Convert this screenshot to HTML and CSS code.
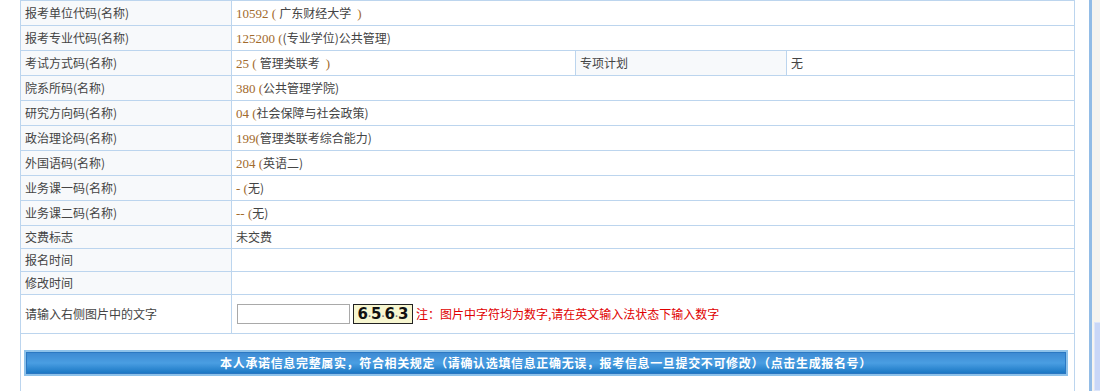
FILE: index.html
```
<!DOCTYPE html>
<html lang="zh-CN">
<head>
    <meta charset="UTF-8">
    <title>报名信息确认</title>
    <link rel="stylesheet" href="styles.css">
</head>
<body>
    <div id="page">
        <div id="main">
            <table class="info">
                <colgroup>
                    <col class="c1"><col class="c2"><col class="c3"><col class="c4">
                </colgroup>
                <tr class="tall">
                    <td class="lbl">报考单位代码(名称)</td>
                    <td colspan="3"><span class="code">10592 ( </span>广东财经大学 <span class="code">&nbsp;)</span></td>
                </tr>
                <tr class="tall">
                    <td class="lbl">报考专业代码(名称)</td>
                    <td colspan="3"><span class="code">125200 (</span>(专业学位)公共管理)</td>
                </tr>
                <tr class="tall">
                    <td class="lbl">考试方式码(名称)</td>
                    <td><span class="code">25 ( </span>管理类联考 <span class="code">&nbsp;)</span></td>
                    <td class="lbl">专项计划</td>
                    <td>无</td>
                </tr>
                <tr class="tall">
                    <td class="lbl">院系所码(名称)</td>
                    <td colspan="3"><span class="code">380 (</span>公共管理学院)</td>
                </tr>
                <tr class="tall">
                    <td class="lbl">研究方向码(名称)</td>
                    <td colspan="3"><span class="code">04 (</span>社会保障与社会政策)</td>
                </tr>
                <tr class="tall">
                    <td class="lbl">政治理论码(名称)</td>
                    <td colspan="3"><span class="code">199(</span>管理类联考综合能力)</td>
                </tr>
                <tr class="tall">
                    <td class="lbl">外国语码(名称)</td>
                    <td colspan="3"><span class="code">204 (</span>英语二)</td>
                </tr>
                <tr class="tall">
                    <td class="lbl">业务课一码(名称)</td>
                    <td colspan="3"><span class="code">- (</span>无)</td>
                </tr>
                <tr class="tall">
                    <td class="lbl">业务课二码(名称)</td>
                    <td colspan="3"><span class="code">-- (</span>无)</td>
                </tr>
                <tr class="short">
                    <td class="lbl">交费标志</td>
                    <td colspan="3">未交费</td>
                </tr>
                <tr class="short">
                    <td class="lbl">报名时间</td>
                    <td colspan="3"></td>
                </tr>
                <tr class="short">
                    <td class="lbl">修改时间</td>
                    <td colspan="3"></td>
                </tr>
                <tr class="check">
                    <td class="plain">请输入右侧图片中的文字</td>
                    <td colspan="3">
                        <div class="verify">
                            <input type="text" class="vcode">
                            <span class="captcha">6<i>·</i>5<i>·</i>6<i>·</i>3</span>
                            <span class="note">注：图片中字符均为数字,请在英文输入法状态下输入数字</span>
                        </div>
                    </td>
                </tr>
                <tr class="last">
                    <td colspan="4">
                        <div class="submit">
                            <div class="submitInner">本人承诺信息完整属实，符合相关规定（请确认选填信息正确无误，报考信息一旦提交不可修改）（点击生成报名号）</div>
                        </div>
                    </td>
                </tr>
            </table>
        </div>
        <div id="scroll">
            <div class="thumb"></div>
        </div>
    </div>
</body>
</html>
```

FILE: styles.css
```
*{
    margin: 0;
    padding: 0;
    box-sizing: border-box;
}

body{
    background: #fff;
    font-family: "Noto Sans CJK SC", "Noto Sans", sans-serif;
    font-size: 12px;
    color: #444;
    overflow: hidden;
}

#page{
    display: flex;
    height: 391px;
    padding-left: 20px;
}

#main{
    width: 1054px;
}

.info{
    width: 1054px;
    border-collapse: collapse;
    table-layout: fixed;
}
.info .c1{ width: 211px; }
.info .c2{ width: 344px; }
.info .c3{ width: 211px; }
.info .c4{ width: 288px; }

.info td{
    border: 1px solid #bcd5ee;
    padding: 0 4px;
    line-height: 14px;
    vertical-align: middle;
    white-space: nowrap;
    overflow: hidden;
}
.info tr.tall td{ height: 25px; }
.info tr.short td{ height: 23px; }
.info tr.check td{ height: 39px; }
.info tr.last td{
    height: 70px;
    vertical-align: top;
    padding: 16px 4px 0 3px;
    border-bottom: none;
}

.info td.lbl{
    background: #f7f9fb;
}

.code{
    font-family: "Liberation Serif", serif;
    font-size: 13px;
    color: #a26a2c;
}

.verify{
    display: flex;
    align-items: center;
}
.vcode{
    width: 113px;
    height: 20px;
    border: 1px solid #a9a9a9;
    margin-left: 1px;
}
.captcha{
    width: 60px;
    height: 20px;
    margin-left: 3px;
    border: 1px solid #222;
    background: #f7f6d0;
    color: #111;
    font-family: "DejaVu Sans", sans-serif;
    font-weight: bold;
    font-size: 15px;
    line-height: 18px;
    text-align: center;
}
.captcha i{
    font-style: normal;
    font-size: 8px;
    color: #777;
}
.note{
    margin-left: 3px;
    color: #e00000;
}

.submit{
    width: 1044px;
    height: 26px;
    padding: 2px;
    background: #8ec2ea;
}
.submitInner{
    height: 22px;
    border: 1px solid #2b78c2;
    background: linear-gradient(#3d8ad3, #4a9ee2 50%, #1b78c4);
    color: #fff;
    font-weight: bold;
    letter-spacing: 0.65px;
    line-height: 20px;
    text-align: center;
}

#scroll{
    width: 11px;
    margin-left: 15px;
    border-left: 3px solid #92bce6;
    background: #f6f4ef;
    display: flex;
    flex-direction: column;
    justify-content: flex-end;
    padding-left: 2px;
}
#scroll .thumb{
    height: 69px;
    background: #c9d7f7;
    border: 1px solid #dde6fb;
    border-right: none;
}
```
